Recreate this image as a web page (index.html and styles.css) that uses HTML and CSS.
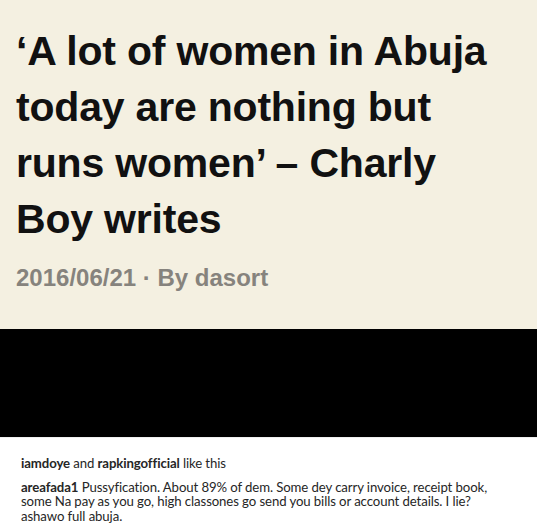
FILE: index.html
```html
<!DOCTYPE html>
<html lang="en">

<head>
    <meta charset="UTF-8">
    <meta name="viewport" content="width=device-width, initial-scale=1.0">
    <title>Charly Boy writes</title>

    <link rel="stylesheet" href="styles.css">

</head>

<body>
    <div id="post">
        <div class="article">
            <h1 class="headline">‘A lot of women in Abuja<br>today are nothing but<br>runs women’ – Charly<br>Boy writes</h1>
            <p class="meta">2016/06/21 · By dasort</p>
        </div>
        <div class="videoBar"></div>
    </div>

    <div id="comments">
        <p class="likes"><span class="user">iamdoye</span> and <span class="user">rapkingofficial</span> like this</p>
        <p class="comment"><span class="user">areafada1</span> Pussyfication. About 89% of dem. Some dey carry invoice, receipt book, some Na pay as you go, high classones go send you bills or account details. I lie?<br>ashawo full abuja.</p>
    </div>
</body>

</html>
```

FILE: styles.css
```css
body {
    margin: 0;
    background: #fff;
}

div.article {
    background: #f4f0e1;
    padding: 23px 15px 36px 16px;
}

h1.headline {
    margin: 0;
    font-family: "Liberation Sans", Arial, sans-serif;
    font-weight: 700;
    font-size: 41px;
    line-height: 56px;
    letter-spacing: -0.2px;
    color: #111;
}

p.meta {
    margin: 16px 0 0 0;
    font-family: "Liberation Sans", Arial, sans-serif;
    font-weight: 700;
    font-size: 24px;
    line-height: 30px;
    color: #86837d;
}

div.videoBar {
    height: 108px;
    background: #000;
}

#comments {
    border-top: 1px solid #efefef;
    padding: 15px 22px 0 21px;
    font-family: Lato, sans-serif;
    font-size: 13.2px;
    letter-spacing: -0.1px;
    color: #262626;
}

#comments p {
    margin: 0;
}

p.likes {
    line-height: 20px;
}

p.comment {
    margin-top: 7px !important;
    line-height: 14.3px;
}

span.user {
    font-weight: 700;
}
```
